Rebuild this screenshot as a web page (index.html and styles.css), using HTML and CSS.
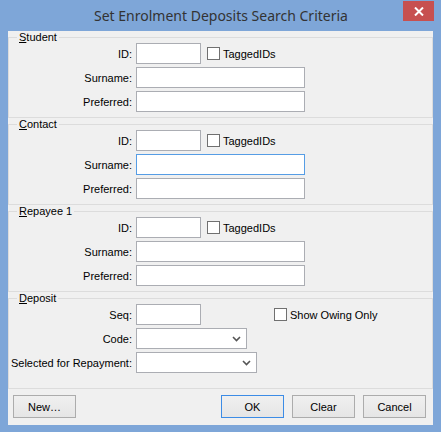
FILE: index.html
```html
<!DOCTYPE html>
<html lang="en">
<head>
    <meta charset="UTF-8">
    <meta name="viewport" content="width=device-width, initial-scale=1.0">
    <title>Set Enrolment Deposits Search Criteria</title>
    <link rel="stylesheet" href="styles.css">
</head>
<body>
    <div class="window">
        <div class="titlebar">
            <span class="title">Set Enrolment Deposits Search Criteria</span>
            <button class="close-button" aria-label="Close">
                <svg width="10" height="9" viewBox="0 0 10 9">
                    <path d="M1 0.5 L9 8.5 M9 0.5 L1 8.5" stroke="#fff" stroke-width="2" fill="none"/>
                </svg>
            </button>
        </div>

        <div class="client">
            <div class="group">
                <div class="group-title"><u>S</u>tudent</div>
                <div class="fields">
                    <label>ID:</label>
                    <div class="inline">
                        <input type="text" class="field short">
                        <span class="check"><span class="check-box"></span>TaggedIDs</span>
                    </div>
                    <label>Surname:</label>
                    <input type="text" class="field long">
                    <label>Preferred:</label>
                    <input type="text" class="field long">
                </div>
            </div>

            <div class="group">
                <div class="group-title"><u>C</u>ontact</div>
                <div class="fields">
                    <label>ID:</label>
                    <div class="inline">
                        <input type="text" class="field short">
                        <span class="check"><span class="check-box"></span>TaggedIDs</span>
                    </div>
                    <label>Surname:</label>
                    <input type="text" class="field long focused">
                    <label>Preferred:</label>
                    <input type="text" class="field long">
                </div>
            </div>

            <div class="group">
                <div class="group-title"><u>R</u>epayee 1</div>
                <div class="fields">
                    <label>ID:</label>
                    <div class="inline">
                        <input type="text" class="field short">
                        <span class="check"><span class="check-box"></span>TaggedIDs</span>
                    </div>
                    <label>Surname:</label>
                    <input type="text" class="field long">
                    <label>Preferred:</label>
                    <input type="text" class="field long">
                </div>
            </div>

            <div class="group deposit">
                <div class="group-title"><u>D</u>eposit</div>
                <div class="fields">
                    <label>Seq:</label>
                    <div class="inline">
                        <input type="text" class="field short">
                        <span class="check owing"><span class="check-box"></span>Show Owing Only</span>
                    </div>
                    <label>Code:</label>
                    <div class="combo code">
                        <svg width="9" height="6" viewBox="0 0 9 6">
                            <path d="M1 1 L4.5 4.5 L8 1" stroke="#555" stroke-width="1.6" fill="none"/>
                        </svg>
                    </div>
                    <label>Selected for Repayment:</label>
                    <div class="combo repay">
                        <svg width="9" height="6" viewBox="0 0 9 6">
                            <path d="M1 1 L4.5 4.5 L8 1" stroke="#555" stroke-width="1.6" fill="none"/>
                        </svg>
                    </div>
                </div>
            </div>

            <div class="button-row">
                <button class="btn">New…</button>
                <span class="spacer"></span>
                <button class="btn default">OK</button>
                <button class="btn">Clear</button>
                <button class="btn">Cancel</button>
            </div>
        </div>
    </div>
</body>
</html>
```

FILE: styles.css
```css
body {
    margin: 0;
    padding: 0;
    font-family: "Liberation Sans", Arial, sans-serif;
    font-size: 11px;
    color: #000;
}

.window {
    width: 441px;
    height: 432px;
    box-sizing: border-box;
    background-color: #7ea6d8;
    padding: 0 8px 7px;
    display: flex;
    flex-direction: column;
}

.titlebar {
    height: 31px;
    display: flex;
    align-items: flex-start;
    padding-left: 31px;
    margin-right: -1px;
}

.title {
    flex: 1;
    text-align: center;
    font-family: "Noto Sans", sans-serif;
    font-size: 14px;
    line-height: 31px;
    color: #333;
}

.close-button {
    width: 31px;
    height: 20px;
    margin-top: 1px;
    border: none;
    padding: 0;
    background-color: #c75050;
    display: flex;
    justify-content: center;
    align-items: center;
}

.client {
    flex: 1;
    background-color: #f0f0f0;
    display: flex;
    flex-direction: column;
}

.group {
    border: 1px solid #dcdcdc;
    margin-top: 6px;
    padding-bottom: 5px;
}

.group.deposit {
    padding-bottom: 15px;
}

.group-title {
    width: fit-content;
    margin: -7px 0 0 8px;
    padding: 0 2px;
    line-height: 12px;
    background-color: #f0f0f0;
}

.fields {
    display: grid;
    grid-template-columns: 123px auto;
    column-gap: 4px;
    row-gap: 3px;
    align-items: center;
    justify-items: start;
}

.fields label {
    justify-self: end;
}

.inline {
    display: flex;
    align-items: center;
}

.field {
    box-sizing: border-box;
    height: 21px;
    margin: 0;
    padding: 0 3px;
    border: 1px solid #abadb3;
    background-color: #fff;
    font: inherit;
}

.field.short {
    width: 65px;
}

.field.long {
    width: 169px;
}

.field.focused {
    border-color: #569de5;
}

.check {
    display: flex;
    align-items: center;
    gap: 3px;
    margin-left: 6px;
}

.check.owing {
    margin-left: 73px;
}

.check-box {
    width: 13px;
    height: 13px;
    box-sizing: border-box;
    border: 1px solid #707070;
    background-color: #fff;
}

.combo {
    box-sizing: border-box;
    height: 21px;
    border: 1px solid #abadb3;
    background-color: #fff;
    display: flex;
    justify-content: flex-end;
    align-items: center;
    padding-right: 5px;
}

.combo.code {
    width: 111px;
}

.combo.repay {
    width: 121px;
}

.button-row {
    display: flex;
    gap: 8px;
    padding: 6px 7px 0 5px;
}

.spacer {
    flex: 1;
}

.btn {
    width: 63px;
    height: 23px;
    margin: 0;
    padding: 0;
    border: 1px solid #acacac;
    background: linear-gradient(#f0f0f0, #e5e5e5);
    font: inherit;
    color: #000;
}

.btn.default {
    border-color: #3c8ce6;
}
```
